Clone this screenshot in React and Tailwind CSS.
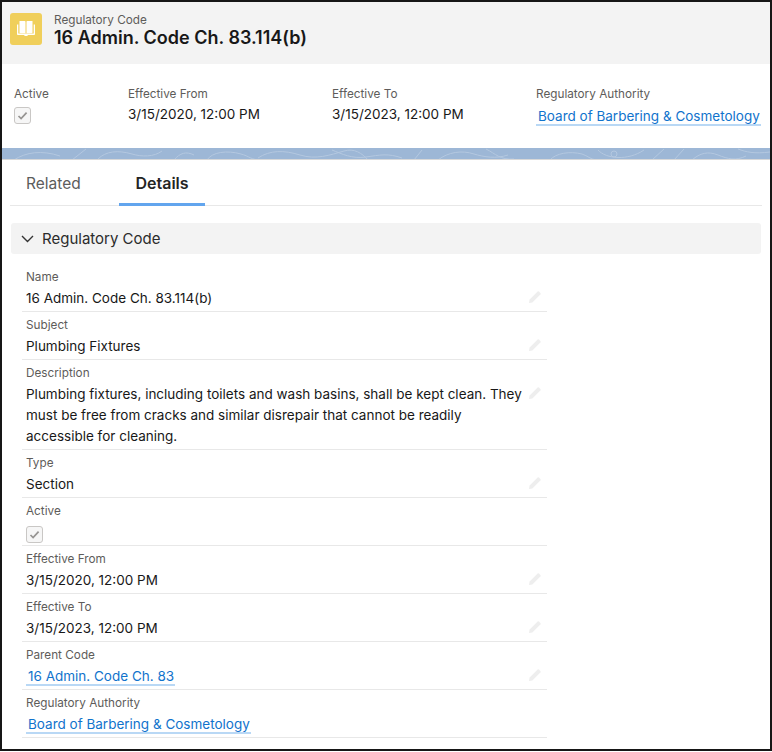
import React from 'react';

const font = { fontFamily: 'Inter, "Liberation Sans", sans-serif' };

const Pencil = () => (
  <svg width="14" height="14" viewBox="0 0 14 14" className="absolute right-[5px] top-[26px]">
    <path d="M1 13l.6-3.4L9.6 1.6a1 1 0 0 1 1.4 0l1.4 1.4a1 1 0 0 1 0 1.4L4.4 12.4z" fill="#eeeeee" />
  </svg>
);

const Check = () => (
  <div className="flex h-[17px] w-[17px] items-center justify-center rounded-[3px] border border-[#c9c7c5] bg-[#f6f6f6]">
    <svg width="11" height="11" viewBox="0 0 11 11">
      <path d="M1.5 6l2.6 2.6L9.6 2.6" fill="none" stroke="#969492" strokeWidth="1.7" />
    </svg>
  </div>
);

const LinkText = ({ children }) => (
  <a className="whitespace-nowrap border-b-2 border-[#b9d8f5] pl-[2px] pr-[1px] leading-[18px] text-[#1173cc]">{children}</a>
);

const Row = ({ label, children, edit = true, h = 'h-[48px]' }) => (
  <div className={`relative ${h} border-b border-[#e8e8e8] pl-1 pr-1`}>
    <div className="pt-[6px] text-[11.75px] leading-[15px] text-[#5e5c5a]">{label}</div>
    <div className="mt-[3px] text-[13.5px] leading-[21px] text-[#181818]">{children}</div>
    {edit && <Pencil />}
  </div>
);

const HighlightField = ({ label, className, children }) => (
  <div className={className}>
    <div className="text-[11.75px] leading-[16px] text-[#5e5c5a]">{label}</div>
    <div className="mt-[2px] text-[13.5px] leading-[20px] text-[#181818]">{children}</div>
  </div>
);

export default function App() {
  return (
    <div style={font} className="h-[752px] w-[772px] overflow-hidden bg-white">
      <div className="h-[751px] border-2 border-[#161616] bg-white">
        <div className="flex h-[62px] items-start bg-[#f3f3f3] pl-[8px] pt-[11px]">
          <div className="flex h-[32px] w-[32px] items-center justify-center rounded-[3px] bg-[#f0cf5b]">
            <svg width="22" height="22" viewBox="0 0 22 22" fill="#fff">
              <path d="M4.5 3h5.2c.5 0 .8.4.8.8v11.4H5.3a.8.8 0 0 1-.8-.8z" />
              <path d="M17.5 3h-5.2c-.5 0-.8.4-.8.8v11.4h5.2c.4 0 .8-.4.8-.8z" />
              <path d="M2 6.5v9.7c0 .5.4.8.8.8h6c.3 0 .6.2.7.5l.2.5h2.6l.2-.5c.1-.3.4-.5.7-.5h6c.4 0 .8-.3.8-.8V6.5h-1.3v9.1H3.3V6.5z" />
            </svg>
          </div>
          <div className="ml-[12px]">
            <div className="mt-[-1px] text-[11.75px] leading-[16px] text-[#5e5c5a]">Regulatory Code</div>
            <div className="text-[18px] font-semibold leading-[20px] text-[#181818]">16 Admin. Code Ch. 83.114(b)</div>
          </div>
        </div>

        <div className="flex h-[84px] pl-[12px] pt-[22px]">
          <HighlightField label="Active" className="w-[114px]">
            <div className="pt-[3px]"><Check /></div>
          </HighlightField>
          <HighlightField label="Effective From" className="w-[204px]">3/15/2020, 12:00 PM</HighlightField>
          <HighlightField label="Effective To" className="w-[204px]">3/15/2023, 12:00 PM</HighlightField>
          <HighlightField label="Regulatory Authority" className="w-[230px]">
            <div className="pt-[2px]"><LinkText>Board of Barbering &amp; Cosmetology</LinkText></div>
          </HighlightField>
        </div>

        <div className="h-[12px] overflow-hidden border-b border-[#d8d8d8] bg-[#9db7d6]">
          <svg width="768" height="12" viewBox="0 0 768 12" fill="none" stroke="#b4c8e0" strokeWidth="1">
            <path d="M12 12C24 4 40 2 58 8M70 12l14-11M96 11c8-8 20-9 34-5 10 3 22 3 30-3M172 12c6-7 12-9 20-5M205 12c5-8 20-10 34-6 8 2 10 6 20 6" />
            <path d="M256 10c12-8 26-8 42-3s30 0 44-4c10-3 18 2 24 9M330 2c10 4 20 9 34 7s22-4 36 1" />
            <path d="M412 12l8-10M436 12c10-8 24-10 36-6 10 3 22 5 34 1M484 1c10 5 14 11 28 10M548 12c6-7 20-9 32-6 6 2 8 5 14 6" />
            <path d="M596 2c8 9 30 11 46 0M650 12l12-11M672 12l10-11M690 12c8-7 16-9 26-5s18 6 28 1M736 1c8 3 16 5 32 3" />
            <circle cx="612" cy="6" r="3" />
          </svg>
        </div>

        <div className="mx-[8px] flex h-[46px] border-b border-[#e8e8e8]">
          <div className="flex w-[109px] items-center pl-[16px] pt-[2px] text-[15.5px] font-normal text-[#5c5c5c]">Related</div>
          <div className="flex h-[46px] w-[86px] items-center justify-center border-b-[3px] border-[#62a5ee] pt-[3px] text-[16px] font-semibold text-[#242424]">Details</div>
        </div>

        <div className="mx-[9px] mt-[17px] flex h-[31px] items-center rounded-[3px] bg-[#f3f3f3] pl-[10px] text-[#2b2b2b]">
          <svg width="13" height="13" viewBox="0 0 13 13" fill="none" stroke="#333" strokeWidth="1.4">
            <path d="M1 4l5.5 5.5L12 4" />
          </svg>
          <span className="ml-[8px] pt-[1px] text-[15px] leading-[20px]">Regulatory Code</span>
        </div>

        <div className="ml-[20px] mt-[10px] w-[525px]">
          <Row label="Name">16 Admin. Code Ch. 83.114(b)</Row>
          <Row label="Subject">Plumbing Fixtures</Row>
          <Row label="Description" h="h-[90px]">
            <div className="max-w-[500px]">
              Plumbing fixtures, including toilets and wash basins, shall be kept clean. They must be free from cracks and similar disrepair that cannot be readily accessible for cleaning.
            </div>
          </Row>
          <Row label="Type">Section</Row>
          <Row label="Active" edit={false}>
            <div className="pt-[4px]"><Check /></div>
          </Row>
          <Row label="Effective From">3/15/2020, 12:00 PM</Row>
          <Row label="Effective To">3/15/2023, 12:00 PM</Row>
          <Row label="Parent Code"><LinkText>16 Admin. Code Ch. 83</LinkText></Row>
          <Row label="Regulatory Authority" edit={false}><LinkText>Board of Barbering &amp; Cosmetology</LinkText></Row>
        </div>
      </div>
    </div>
  );
}
